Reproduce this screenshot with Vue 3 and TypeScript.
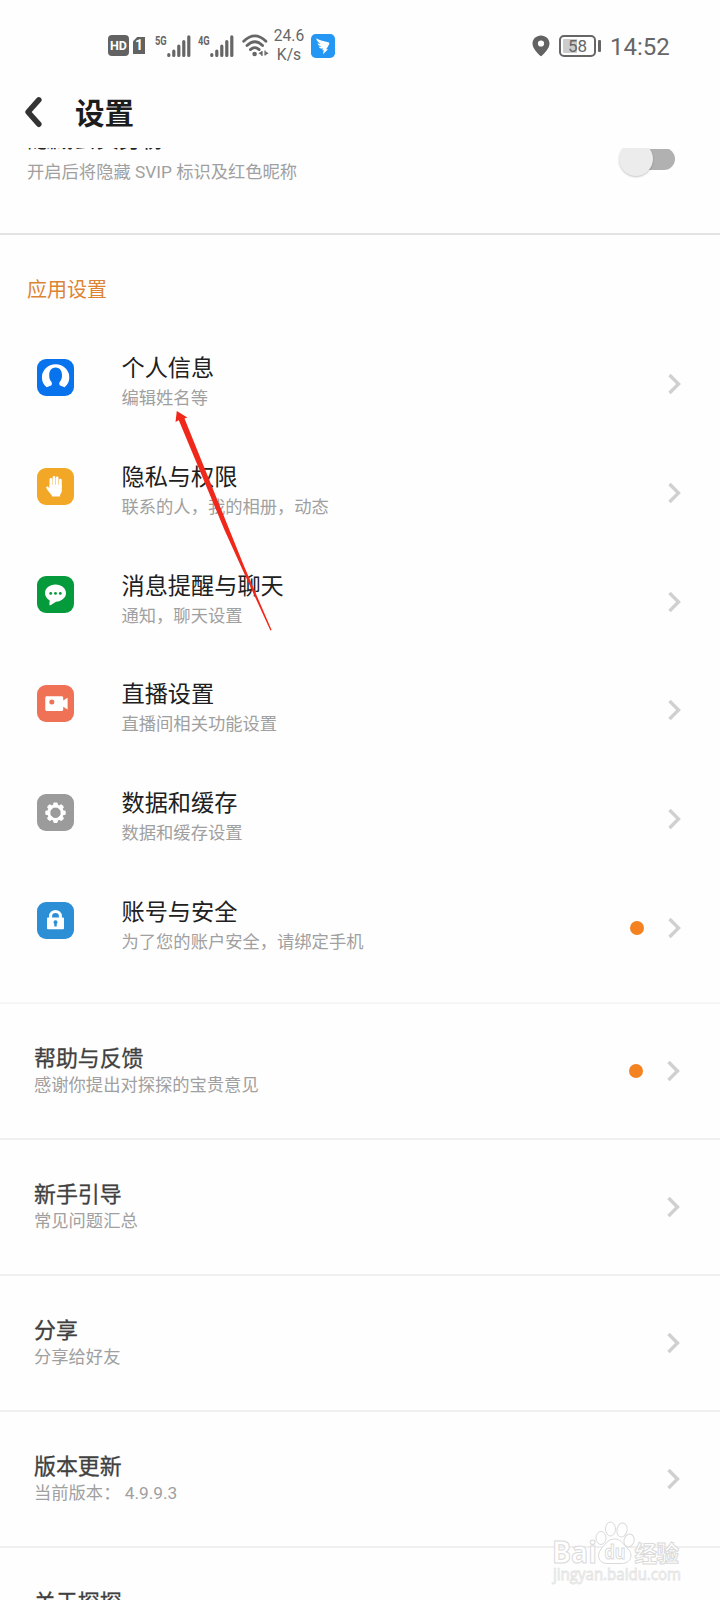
<script setup lang="ts">
type IconName = 'profile' | 'hand' | 'chat' | 'video' | 'gear' | 'lock'

interface AppItem {
  title: string
  desc: string
  icon: IconName
  dot?: boolean
}

interface MoreItem {
  title: string
  desc: string
  dot?: boolean
}

const appItems: AppItem[] = [
  { title: '个人信息', desc: '编辑姓名等', icon: 'profile' },
  { title: '隐私与权限', desc: '联系的人，我的相册，动态', icon: 'hand' },
  { title: '消息提醒与聊天', desc: '通知，聊天设置', icon: 'chat' },
  { title: '直播设置', desc: '直播间相关功能设置', icon: 'video' },
  { title: '数据和缓存', desc: '数据和缓存设置', icon: 'gear' },
  { title: '账号与安全', desc: '为了您的账户安全，请绑定手机', icon: 'lock', dot: true },
]

const moreItems: MoreItem[] = [
  { title: '帮助与反馈', desc: '感谢你提出对探探的宝贵意见', dot: true },
  { title: '新手引导', desc: '常见问题汇总' },
  { title: '分享', desc: '分享给好友' },
  { title: '版本更新', desc: '当前版本： 4.9.9.3' },
  { title: '关于探探', desc: '' },
]

const teeth = [0, 45, 90, 135, 180, 225, 270, 315]
</script>

<template>
  <div class="screen">
    <div class="status">
      <div class="status-left">
        <span class="hd">HD</span>
        <span class="sim">1</span>
        <div v-for="net in ['5G', '4G']" :key="net" class="signal">
          <span class="net">{{ net }}</span>
          <svg width="24" height="22" viewBox="0 0 24 22" fill="none" stroke="#666" stroke-width="3.200" stroke-linecap="round">
            <path d="M1.800 19.600v.8M6.800 16v4.400M11.800 11.200v9.200M16.800 6.600v13.800M21.800 1.800v18.600" />
          </svg>
        </div>
        <svg class="wifi" width="28" height="23" viewBox="0 0 28 23">
          <g fill="none" stroke="#666" stroke-width="2.800" stroke-linecap="round">
            <path d="M1.700 7.200Q12.800-3.400 23.900 7.200" />
            <path d="M5 11.600Q12.800 4 20.600 11.600" />
            <path d="M8.400 15.600Q12.800 11.600 17.200 15.600" />
          </g>
          <circle cx="12.600" cy="20" r="2.300" fill="#666" />
          <path d="M16.400 19.300l3-1.700v3.400zM26.600 19.300l-3-1.700v3.400zM19.300 17h1.300v5h-1.300zM22.400 16.600h1.300v5h-1.300z" fill="#666" />
        </svg>
        <div class="speed"><span>24.6</span><span>K/s</span></div>
        <svg class="ding" width="24" height="24" viewBox="0 0 25 25">
          <rect width="25" height="25" rx="5" fill="#2496f3" />
          <path d="M5.400 4.400c4 2.300 8.300 3.300 12.600 4.100 1 .3 1.400 1 1 2-.8 2-2 3.700-3.200 5.400h2L12.400 21.200l1-4.200h-1.700l.8-1.800c-2.200.2-3.700-.6-4.400-2l3-.2c-2.200-.5-3.800-1.400-4.400-3.100l3.500.3C7.600 8.700 5.800 7 5.400 4.400z" fill="#fff" />
        </svg>
      </div>
      <div class="status-right">
        <svg width="18" height="22" viewBox="0 0 18 22">
          <path fill-rule="evenodd" d="M9 .4C4.200.4.500 4 .500 8.500c0 5 5 9.500 7.700 12.300.5.5 1.100.5 1.600 0C12.500 18 17.500 13.500 17.500 8.500 17.500 4 13.800.4 9 .4zm0 5a3.100 3.100 0 1 1 0 6.200 3.100 3.100 0 0 1 0-6.200z" fill="#626262" />
        </svg>
        <div class="battery"><span>58</span></div>
        <i class="nub"></i>
        <span class="clock">14:52</span>
      </div>
    </div>

    <header class="header">
      <svg width="20" height="34" viewBox="0 0 20 34" fill="none" stroke="#333" stroke-width="5.600" stroke-linecap="round" stroke-linejoin="round">
        <path d="M15.800 4.900L5 17l10.800 12.200" />
      </svg>
      <h1>设置</h1>
    </header>

    <main class="content">
      <section class="vip">
        <div>
          <p class="vip-title">隐藏会员身份</p>
          <p class="desc">开启后将隐藏 SVIP 标识及红色昵称</p>
        </div>
        <span class="switch"></span>
      </section>

      <section class="apps">
        <h2>应用设置</h2>
        <div v-for="item in appItems" :key="item.title" class="row">
          <svg class="tile" :class="item.icon" width="37" height="37" viewBox="0 0 37 37">
            <g v-if="item.icon === 'profile'">
              <path d="M9.600 28.300A13.700 13.200 0 1 1 27.600 28.300l-4.600-1.900c-.9-.6-.9-2.400-.3-3.400 1.700-1.800 2.300-4 2.300-6.800 0-4.700-2.400-7.700-6.400-7.700s-6.400 3-6.400 7.700c0 2.800.6 5 2.300 6.800.6 1 .6 2.800-.3 3.400z" fill="#fff" />
            </g>
            <g v-else-if="item.icon === 'hand'" fill="none" stroke="#fff" stroke-width="2.700" stroke-linecap="round">
              <path d="M13.900 18.500V11.400M17 17V9.400M20.200 17V9.900M23.400 19V12.200" />
              <path d="M12.500 16.800h12.300v6.200c0 1.600-1.600 2.900-2 5.500h-7.600c-.5-2.600-5.300-5.800-6.200-9.600.9-1 2.200-.5 3.500 1.300z" fill="#fff" stroke="none" />
            </g>
            <g v-else-if="item.icon === 'chat'">
              <path d="M18.500 8.500c5.900 0 10.500 3.600 10.500 8.600s-4.600 8.400-10 8.600l-5.500 3.500c-.8.3-1.200 0-1.100-.8l.3-3.900C9.800 22.900 8 20.400 8 17.100c0-5 4.600-8.600 10.500-8.600z" fill="#fff" />
              <g fill="#059a3c"><circle cx="13.700" cy="17.400" r="1.400" /><circle cx="18.500" cy="17.400" r="1.400" /><circle cx="23.300" cy="17.400" r="1.400" /></g>
            </g>
            <g v-else-if="item.icon === 'video'">
              <path d="M9.800 11.200h14.900c.9 0 1.500.6 1.500 1.500v2.700l4.400-2.700v11.700l-4.400-2.700v2.800c0 .9-.6 1.500-1.500 1.500H9.800c-.9 0-1.500-.6-1.500-1.500V12.700c0-.9.6-1.500 1.500-1.500z" fill="#fff" />
              <circle cx="14.800" cy="17" r="2.500" fill="#ef7257" />
            </g>
            <g v-else-if="item.icon === 'gear'">
              <rect v-for="a in teeth" :key="a" x="16.200" y="8.500" width="4.600" height="5" rx="1.300" fill="#fff" :transform="`rotate(${a} 18.500 18.700)`" />
              <circle cx="18.500" cy="18.700" r="6.800" fill="none" stroke="#fff" stroke-width="2.800" />
            </g>
            <g v-else>
              <path d="M13.600 16.500v-2.400c0-6.200 9.800-6.200 9.800 0v2.400" fill="none" stroke="#fff" stroke-width="3" />
              <rect x="10" y="15.500" width="17" height="11.700" rx="1" fill="#fff" />
              <path d="M18.500 18.300a2 2 0 0 1 1.200 3.600v2.700h-2.400v-2.700a2 2 0 0 1 1.200-3.600z" fill="#2c8fd6" />
            </g>
          </svg>
          <div class="text">
            <p class="title">{{ item.title }}</p>
            <p class="desc">{{ item.desc }}</p>
          </div>
          <i v-if="item.dot" class="dot"></i>
          <svg class="chevron" width="14" height="22" viewBox="0 0 14 22"><path d="M2.500 2l9 9-9 9" /></svg>
        </div>
      </section>

      <section class="more">
        <div v-for="item in moreItems" :key="item.title" class="more-row">
          <div class="text">
            <p class="title">{{ item.title }}</p>
            <p class="desc">{{ item.desc }}</p>
          </div>
          <i v-if="item.dot" class="dot"></i>
          <svg class="chevron" width="14" height="22" viewBox="0 0 14 22"><path d="M2.500 2l9 9-9 9" /></svg>
        </div>
      </section>
    </main>

    <svg class="arrow" width="98" height="222" viewBox="0 0 98 222">
      <path d="M2.800 1L1.500 12l3.300-1.800L50.500 120 67.500 157.500 96.400 220.500 97.600 220 70 156 55.500 120 10.500 8.400l2.800-.8z" fill="#f0281b" />
    </svg>

    <svg class="watermark" width="140" height="70" viewBox="0 0 140 70">
      <g fill="#fff" stroke="#dadada" stroke-width="1">
        <text x="-8" y="42.500" class="wm-latin" font-size="30" textLength="45" lengthAdjust="spacingAndGlyphs">Bai</text>
        <ellipse cx="41" cy="18" rx="5" ry="6.500" />
        <ellipse cx="50.500" cy="9" rx="5" ry="7" />
        <ellipse cx="62" cy="10" rx="5" ry="7" transform="rotate(12 62 10)" />
        <ellipse cx="69" cy="20.500" rx="5" ry="6.500" transform="rotate(18 69 20.500)" />
        <path d="M54.500 19c7 0 9 6 13.500 10 6 6 2 14.500-6 14.500H47c-8 0-11-8-6-14.500 4-4 6.500-10 13.500-10z" />
        <text x="44.500" y="39" class="wm-latin" font-size="19" textLength="21" lengthAdjust="spacingAndGlyphs">du</text>
        <text x="74.500" y="41.500" class="wm-cjk" font-size="22.500" textLength="44.500">经验</text>
      </g>
      <text x="-7" y="60" class="wm-url" font-size="16" textLength="128" lengthAdjust="spacingAndGlyphs">jingyan.baidu.com</text>
    </svg>
  </div>
</template>

<style>
body {
  background: #fefefe;
}
</style>

<style scoped>
.screen {
  position: relative;
  width: 720px;
  height: 1600px;
  overflow: hidden;
  background: #fefefe;
  display: flex;
  flex-direction: column;
  font-family: Roboto, 'Noto Sans CJK SC', sans-serif;
}
p, h1, h2 { margin: 0; }
svg { flex: none; display: block; overflow: visible; }

.status {
  flex: none;
  height: 90px;
  display: flex;
  justify-content: space-between;
  color: #666;
  box-sizing: border-box;
  padding: 0 50px 0 108px;
}
.status-left, .status-right { display: flex; align-items: center; height: 91px; }
.hd {
  width: 21px;
  height: 21px;
  border-radius: 4px;
  background: #626262;
  color: #fff;
  font: 700 12.500px/21px Roboto, sans-serif;
  text-align: center;
}
.sim {
  width: 12px;
  height: 17px;
  margin-left: 4px;
  background: #626262;
  clip-path: polygon(35% 0, 100% 0, 100% 100%, 0 100%, 0 25%);
  color: #fff;
  font: 700 14px/17px Roboto, sans-serif;
  text-align: center;
}
.signal { display: flex; align-items: flex-start; margin-left: 10px; }
.signal + .signal { margin-left: 7px; }
.net {
  width: 12px;
  font: 700 13px/11px Roboto, sans-serif;
  transform: scaleX(.72);
  transform-origin: 0 0;
}
.wifi { margin-left: 8px; }
.speed {
  display: flex;
  flex-direction: column;
  align-items: center;
  width: 34px;
  margin-left: 2px;
  padding-top: 1px;
  font-size: 15.600px;
  line-height: 19px;
}
.ding { margin-left: 5px; }
.battery {
  box-sizing: border-box;
  width: 37px;
  height: 22px;
  margin-left: 9px;
  border: 2px solid #666;
  border-radius: 5px;
  padding: 2px;
  background: linear-gradient(90deg, #ccc 50%, transparent 0) content-box;
  font-size: 17px;
  line-height: 15px;
  text-align: center;
}
.nub { width: 3px; height: 12px; margin-left: 2px; border-radius: 1px; background: #666; }
.clock { width: 60px; margin-left: 9px; padding-top: 2px; font-size: 24px; white-space: nowrap; }

.header {
  flex: none;
  height: 58px;
  display: flex;
  align-items: flex-start;
  padding-left: 23px;
}
.header svg { margin-top: 5px; }
h1 { margin: 2px 0 0 32px; font-size: 29.500px; line-height: 44px; font-weight: 700; color: #1c1c1c; }

.content { flex: none; height: 1452px; overflow: hidden; }
.desc { font-size: 17.300px; line-height: 24px; color: #a0a0a0; white-space: nowrap; }
.vip {
  height: 85px;
  border-bottom: 2px solid #e3e3e3;
  display: flex;
  justify-content: space-between;
  padding: 0 45px 0 27px;
}
.vip-title { margin-top: -25px; font-size: 23px; line-height: 34px; color: #222; }
.vip .desc { margin-top: 3px; }
.switch {
  position: relative;
  width: 48px;
  height: 22px;
  border-radius: 11px;
  background: linear-gradient(#fefefe 1px, #b1b1b1 0);
}
.switch::before {
  content: '';
  position: absolute;
  left: -8px;
  top: -6px;
  width: 34px;
  height: 34px;
  border-radius: 50%;
  background: #ececec;
  box-shadow: 0 1px 2px rgba(0, 0, 0, .22);
}

.apps { height: 767px; border-bottom: 2px solid #f6f6f6; }
h2 { padding: 41px 0 0 27px; font-size: 20px; line-height: 28px; font-weight: 400; color: #dd8434; }
.row {
  height: 108.700px;
  display: flex;
  align-items: center;
  padding: 0 39px 0 37px;
}
.row:nth-of-type(1) { margin-top: 19px; }
.tile { border-radius: 9px; }
.profile { background: #0873ec; }
.hand { background: #f2a726; }
.chat { background: #059a3c; }
.video { background: #ef7257; }
.gear { background: #9b9b9b; }
.lock { background: #2c8fd6; }
.text { flex: 1; }
.row .text { margin: 7px 0 0 47.500px; }
.row .title { font-size: 23.200px; line-height: 34px; color: #202020; }
.row .desc { margin-top: 1px; }
.row .chevron { margin-top: 14px; }
.dot { width: 14px; height: 14px; border-radius: 50%; background: #f58220; }
.row .dot { margin: 14px 23px 0 0; }
.chevron path { fill: none; stroke: #d0d0d0; stroke-width: 3.400; }

.more-row {
  box-sizing: border-box;
  height: 136px;
  border-bottom: 2px solid #efefef;
  display: flex;
  align-items: center;
  padding: 0 40px 0 34px;
}
.more-row .title {
  font-size: 21.900px;
  line-height: 30px;
  color: #404040;
  -webkit-text-stroke: .3px #404040;
}
.more-row .text { align-self: flex-start; margin-top: 40px; }
.more-row .desc { margin-top: -1px; }
.more-row .dot { margin-right: 23px; }

.arrow { position: absolute; left: 173.500px; top: 410px; }
.watermark { position: absolute; left: 560px; top: 1520px; }
.wm-latin { font-family: 'Open Sans', sans-serif; font-weight: 700; }
.wm-cjk { font-family: 'Noto Sans CJK SC', sans-serif; font-weight: 700; }
.wm-url { font-family: 'Open Sans', sans-serif; fill: #fff; stroke: #e2e2e2; stroke-width: .8px; }
</style>
